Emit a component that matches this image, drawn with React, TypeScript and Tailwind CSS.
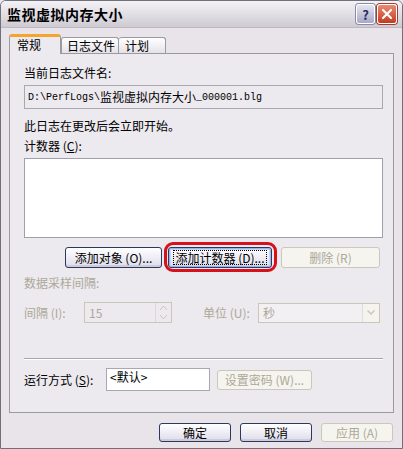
import React from "react";

const cjk = '"Noto Sans CJK SC", "Liberation Sans", sans-serif';
const mono = '"Liberation Mono", "Noto Sans CJK SC", monospace';

const Btn: React.FC<{
  label: string;
  width: string;
  disabled?: boolean;
  focused?: boolean;
  className?: string;
}> = ({ label, width, disabled, focused, className }) => {
  if (disabled) {
    return (
      <div
        className={`${width} ${className ?? ""} flex items-center justify-center rounded-[3px] border border-[#cac8bb] bg-[#f5f4ef] text-[12px] text-[#aca899]`}
      >
        {label}
      </div>
    );
  }
  return (
    <div
      className={`${width} ${className ?? ""} flex items-center justify-center rounded-[3px] border border-[#2a3a5a] bg-gradient-to-b from-white to-[#dedcea] text-[12px] text-black ${
        focused ? "shadow-[inset_0_0_0_1px_#9db4e6,inset_0_0_0_2px_#c6d6f6]" : "shadow-[inset_0_-2px_0_#cfcbdc]"
      }`}
    >
      {focused ? (
        <span className="border border-dotted border-black px-[1px] leading-[13px]">{label}</span>
      ) : (
        label
      )}
    </div>
  );
};

export default function App() {
  return (
    <div
      className="w-[403px] h-[449px] overflow-hidden bg-[#eae6ec]"
      style={{ fontFamily: cjk }}
    >
      <div className="h-full flex flex-col border border-[#707078] rounded-t-[6px] bg-[#e8e4ea]">
        {/* title bar */}
        <div className="h-[27px] flex items-center justify-between pl-[6px] pr-[5px] rounded-t-[5px] bg-gradient-to-b from-[#f4f2f6] via-[#e2dee6] to-[#cfcbd3] border-b border-[#bdb8c2]">
          <span className="text-[14px] font-bold text-black leading-none tracking-[0.5px]">
            监视虚拟内存大小
          </span>
          <div className="flex gap-[2px]">
            <div className="w-[19px] h-[20px] rounded-[3px] border border-white bg-gradient-to-b from-[#e6e6f2] to-[#a8a8c4] flex items-center justify-center text-[13px] font-bold text-[#2c2c60] leading-none shadow-[0_0_0_1px_#8a8aa6]">
              ?
            </div>
            <div className="w-[20px] h-[20px] rounded-[3px] border border-white bg-gradient-to-b from-[#e88a72] to-[#c43a1e] flex items-center justify-center shadow-[0_0_0_1px_#a04030]">
              <svg width="12" height="12" viewBox="0 0 12 12">
                <path d="M2 2 L10 10 M10 2 L2 10" stroke="white" strokeWidth="2.2" strokeLinecap="round" />
              </svg>
            </div>
          </div>
        </div>

        <div className="flex-1 flex flex-col px-[8px] pt-[6px]">
          {/* tabs */}
          <div className="flex items-end h-[19px] relative z-10">
            <div className="w-[52px] h-[20px] -mb-[1px] bg-[#ece9ef] border border-b-0 border-[#9a9aa2] rounded-t-[3px] border-t-[3px] border-t-[#f4a62c] pl-[7px] text-[12px] leading-[15px]">
              常规
            </div>
            <div className="w-[58px] h-[16px] bg-gradient-to-b from-white to-[#e4e2e8] border border-b-0 border-[#9a9aa2] rounded-t-[3px] pl-[5px] text-[12px] leading-[15px]">
              日志文件
            </div>
            <div className="w-[47px] h-[16px] bg-gradient-to-b from-white to-[#e4e2e8] border border-b-0 border-l-0 border-[#9a9aa2] rounded-t-[3px] pl-[6px] text-[12px] leading-[15px]">
              计划
            </div>
          </div>

          {/* panel */}
          <div className="h-[360px] border border-[#9a9aa2] bg-[#ece9ef] pl-[14px] pr-[10px] flex flex-col text-[12px] text-black">
            <div className="mt-[12px] h-[14px] leading-[14px]">当前日志文件名:</div>
            <div className="mt-[5px] h-[24px] border border-[#a8a8b0] flex items-center pl-[3px] whitespace-nowrap">
              <span style={{ fontFamily: mono }} className="text-[10px]">D:\PerfLogs\</span>
              <span className="text-[12px]">监视虚拟内存大小</span>
              <span style={{ fontFamily: mono }} className="text-[10px]">_000001.blg</span>
            </div>
            <div className="mt-[10px] h-[14px] leading-[14px]">此日志在更改后会立即开始。</div>
            <div className="mt-[6px] h-[14px] leading-[14px]">
              计数器 (<span className="underline">C</span>):
            </div>
            <div className="mt-[5px] h-[80px] border border-[#a0a0ac] bg-white" />

            <div className="mt-[9px] h-[21px] flex">
              <Btn label="添加对象 (O)..." width="w-[97px]" className="ml-[41px]" />
              <div className="relative ml-[6px]">
                <Btn label="添加计数器 (D)..." width="w-[104px] h-full" focused />
                <div className="absolute -left-[4px] -right-[5px] -top-[5px] -bottom-[4px] border-[3px] border-[#d6101c] rounded-[9px]" />
              </div>
              <Btn label="删除 (R)" width="w-[99px]" disabled className="ml-[9px]" />
            </div>

            <div className="mt-[8px] h-[14px] leading-[14px] text-[#aca899]">数据采样间隔:</div>

            <div className="mt-[12px] h-[21px] flex items-center text-[#aca899]">
              <span className="w-[60px]">间隔 (I):</span>
              <div className="w-[88px] h-[21px] border border-[#c9c7ba] flex items-center justify-between pl-[4px]">
                <span>15</span>
                <div className="w-[16px] h-full flex flex-col border-l border-[#dcdad0]">
                  <div className="flex-1 flex items-center justify-center">
                    <svg width="7" height="4" viewBox="0 0 7 4"><path d="M0 4 L3.5 0 L7 4" fill="none" stroke="#c9c7ba" /></svg>
                  </div>
                  <div className="flex-1 flex items-center justify-center">
                    <svg width="7" height="4" viewBox="0 0 7 4"><path d="M0 0 L3.5 4 L7 0" fill="none" stroke="#c9c7ba" /></svg>
                  </div>
                </div>
              </div>
              <span className="ml-[31px] w-[55px]">单位 (U):</span>
              <div className="w-[122px] h-[20px] border border-[#c9c7ba] bg-[#f2f0f2] flex items-center justify-between pl-[4px]">
                <span>秒</span>
                <div className="w-[17px] h-full border-l border-[#e0ded8] bg-[#f4f3ee] flex items-center justify-center">
                  <svg width="8" height="5" viewBox="0 0 8 5"><path d="M0.5 0.5 L4 4 L7.5 0.5" fill="none" stroke="#c9c7ba" strokeWidth="1.5" /></svg>
                </div>
              </div>
            </div>

            <div className="mt-[35px] h-[2px] border-t border-[#a8a4ac] border-b border-b-white" />

            <div className="mt-[8px] h-[23px] flex items-center">
              <span className="w-[82px]">
                运行方式 (<span className="underline">S</span>):
              </span>
              <div className="w-[104px] h-[23px] border border-[#a8a8b0] bg-white pl-[3px] leading-[16px]">&lt;默认&gt;</div>
              <Btn label="设置密码 (W)..." width="w-[95px] h-[20px]" disabled className="ml-[7px]" />
            </div>
          </div>

          {/* bottom buttons */}
          <div className="mt-[10px] h-[19px] flex justify-end gap-[9px] mr-[1px]">
            <Btn label="确定" width="w-[72px]" />
            <Btn label="取消" width="w-[72px]" />
            <Btn label="应用 (A)" width="w-[72px]" disabled />
          </div>
        </div>
      </div>
    </div>
  );
}
